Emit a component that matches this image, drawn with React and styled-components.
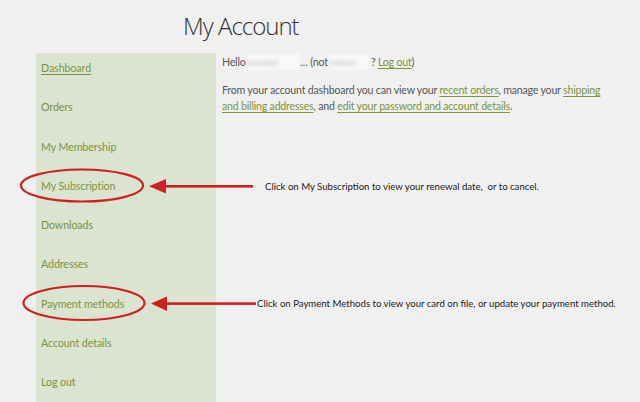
import React from "react";
import styled, { createGlobalStyle } from "styled-components";

const GlobalStyle = createGlobalStyle`
  html, body {
    margin: 0;
    padding: 0;
    background: #f0f0f0;
    overflow: hidden;
  }
  body {
    font-family: Lato, "Open Sans", sans-serif;
  }
`;

const Page = styled.div`
  position: relative;
  width: 640px;
  height: 402px;
  overflow: hidden;
  background: #f0f0f0;
`;

const Title = styled.h1`
  margin: 0;
  padding: 10px 0 0 183px;
  height: 53px;
  box-sizing: border-box;
  font-family: "Open Sans", Lato, sans-serif;
  font-weight: 300;
  font-size: 24px;
  line-height: 32px;
  color: #333;
  letter-spacing: -1px;
`;

const Layout = styled.div`
  display: flex;
  gap: 6px;
  padding-left: 36px;
`;

const Sidebar = styled.nav`
  width: 180px;
  min-height: 360px;
  background: #dbe3d1;
  display: flex;
  flex-direction: column;
  padding: 7px 0 0 5px;
  box-sizing: border-box;
`;

const NavItem = styled.a`
  display: block;
  height: 39.3px;
  line-height: 15px;
  font-size: 10.7px;
  letter-spacing: -0.1px;
  color: #7a9440;
  text-decoration: ${(p) => (p.$active ? "underline" : "none")};
  text-underline-offset: 2px;
`;

const Content = styled.div`
  flex: 1;
  padding-top: 1px;
  font-size: 10.6px;
  letter-spacing: -0.2px;
  color: #575757;
  line-height: 16px;
  padding-right: 30px;
`;

const Para = styled.p`
  margin: 0 0 12px 0;
`;

const Link = styled.a`
  color: #7a9440;
  text-decoration: underline;
  text-underline-offset: 2px;
`;

const Blur = styled.span`
  display: inline-block;
  width: ${(p) => p.$w}px;
  color: transparent;
  text-shadow: 0 0 3px rgba(80, 80, 80, 0.35);
  background: rgba(255, 255, 255, 0.6);
  filter: blur(1px);
`;

const Overlay = styled.svg`
  position: absolute;
  left: 0;
  top: 0;
  pointer-events: none;
`;

const Note = styled.div`
  position: absolute;
  left: ${(p) => p.$x}px;
  top: ${(p) => p.$y}px;
  font-family: Lato, sans-serif;
  font-size: 9.6px;
  color: #1a1a1a;
  white-space: nowrap;
`;

const items = [
  "Dashboard",
  "Orders",
  "My Membership",
  "My Subscription",
  "Downloads",
  "Addresses",
  "Payment methods",
  "Account details",
  "Log out",
];

export default function App() {
  return (
    <Page>
      <GlobalStyle />
      <Title>My Account</Title>
      <Layout>
        <Sidebar>
          {items.map((it, i) => (
            <NavItem key={it} $active={i === 0}>
              {it}
            </NavItem>
          ))}
        </Sidebar>
        <Content>
          <Para>
            Hello <Blur $w={52}>xxxxxx</Blur>… (not <Blur $w={38}>xxxxx</Blur> ?{" "}
            <Link>Log out</Link>)
          </Para>
          <Para>
            From your account dashboard you can view your <Link>recent orders</Link>, manage
            your <Link>shipping</Link>
            <br />
            <Link>and billing addresses</Link>, and{" "}
            <Link>edit your password and account details</Link>.
          </Para>
        </Content>
      </Layout>

      <Overlay width="640" height="402" viewBox="0 0 640 402">
        <g fill="none" stroke="#cf1f1f" strokeWidth="2.2">
          <ellipse cx="82" cy="185.5" rx="61" ry="16" />
          <ellipse cx="84" cy="303" rx="60.5" ry="17" />
        </g>
        <g fill="#cf1f1f">
          <rect x="162" y="185" width="91" height="2.6" />
          <polygon points="149,186.3 166,179 166,193.6" />
          <rect x="164" y="302.3" width="92" height="2.6" />
          <polygon points="151,303.6 167,296.4 167,311" />
        </g>
      </Overlay>
      <Note $x={265} $y={181}>
        Click on My Subscription to view your renewal date,&nbsp; or to cancel.
      </Note>
      <Note $x={257} $y={298}>
        Click on Payment Methods to view your card on file, or update your payment method.
      </Note>
    </Page>
  );
}
